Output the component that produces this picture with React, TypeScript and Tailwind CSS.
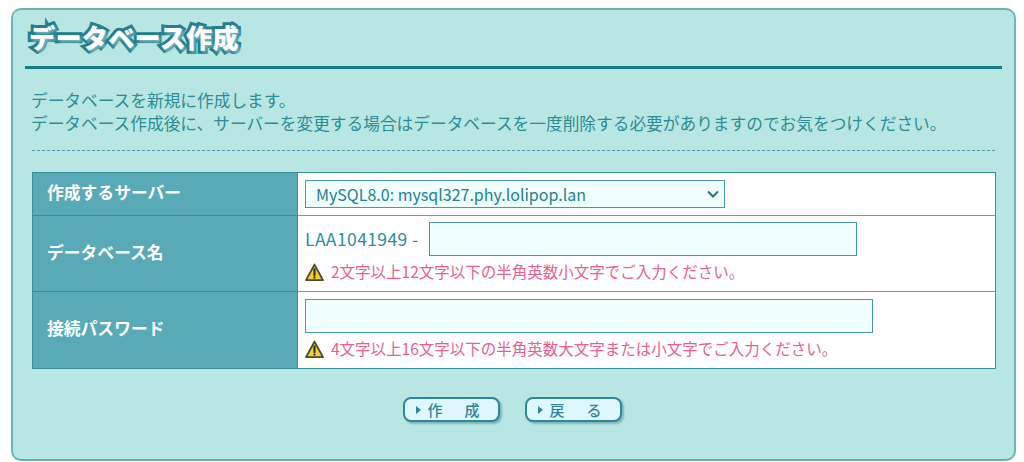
const font = "[font-family:'Noto_Sans_CJK_JP','Noto_Sans',sans-serif]";

function Warning() {
  return (
    <svg width="19" height="19" viewBox="0 0 18 18" className="shrink-0">
      <path d="M9 1.5L17 16.2H1Z" fill="#f3cf2d" stroke="#4a4a38" strokeWidth="1.8" strokeLinejoin="round" />
      <path d="M9 6v5.5" stroke="#33302a" strokeWidth="2" strokeLinecap="round" />
      <circle cx="9" cy="13.8" r="1.1" fill="#33302a" />
    </svg>
  );
}

function Note({ children }: { children: string }) {
  return (
    <div className="flex items-center gap-[7px] text-[15.5px] leading-[20px] text-[#e8608f]">
      <Warning />
      <span className="-translate-y-[1px]">{children}</span>
    </div>
  );
}

function ImgButton({ first, last }: { first: string; last: string }) {
  return (
    <button className="flex h-[25px] w-[97px] items-center rounded-[8px] border-2 border-[#2f8795] bg-[#dff6fd] pl-[11px] text-[15px] leading-none font-medium text-[#2f8795] shadow-[2px_2px_2px_#7fb5bd]">
      <span className="mr-[7px] h-0 w-0 border-y-[4px] border-l-[5px] border-y-transparent border-l-[#2f8795]" />
      <span className="w-[37px] text-left">{first}</span>
      <span>{last}</span>
    </button>
  );
}

export default function App() {
  return (
    <div className={`h-[462px] w-[1024px] overflow-hidden bg-white pt-[8px] pl-[11px] ${font}`}>
      <div className="h-[453px] w-[1005px] rounded-[10px] border-2 border-[#6db5ba] border-t-[#6fb2b6] border-b-[#6aa9ae] bg-[#b8e7e3] px-[12px] pt-[9px]">
        <div className="h-[50px] border-b-[3px] border-[#137c88] pl-[4px]">
          <h1 className="-translate-y-[3px] text-[26.2px] leading-[42px] font-black tracking-[0.2px] text-white [-webkit-text-stroke:6px_#237f8e] [paint-order:stroke_fill] [text-shadow:2px_2px_3px_#7fb5bd]">
            データベース作成
          </h1>
        </div>

        <div className="mx-[7px]">
          <p className="pt-[20px] pb-[15px] -ml-[1px] text-[16.7px] leading-[23px] text-[#2b8d97]">
            データベースを新規に作成します。
            <br />
            データベース作成後に、サーバーを変更する場合はデータベースを一度削除する必要がありますのでお気をつけください。
          </p>
          <div className="border-t border-dashed border-[#4b9fa6]" />

          <div className="mt-[21px] grid h-[197px] w-[964px] grid-cols-[265px_1fr] grid-rows-[43px_76px_1fr] border border-[#3b8f9c] bg-white">
            <div className="flex items-center border-r border-b border-[#3b8f9c] bg-[#58aab7] pb-[2px] pl-[14px] text-[16.8px] font-bold text-white">
              作成するサーバー
            </div>
            <div className="flex items-center border-b border-[#5ea5ac] pl-[7px]">
              <div className="flex h-[28px] w-[420px] items-center justify-between border border-[#4b9aa3] bg-[#effffe] pr-[4px] pl-[10px] text-[16px] text-[#267f8c]">
                <span>MySQL8.0: mysql327.phy.lolipop.lan</span>
                <svg width="14" height="14" viewBox="0 0 14 14" fill="none">
                  <path d="M2 4.5L7 9.5L12 4.5" stroke="#267480" strokeWidth="2" />
                </svg>
              </div>
            </div>

            <div className="flex items-center border-r border-b border-[#3b8f9c] bg-[#58aab7] pb-[2px] pl-[14px] text-[16.8px] font-bold text-white">
              データベース名
            </div>
            <div className="flex flex-col gap-[6px] border-b border-[#5ea5ac] pt-[6px] pl-[7px]">
              <div className="flex items-center gap-[6px] text-[17.5px] tracking-[0.4px] text-[#2b8d97]">
                <span className="w-[118px] whitespace-nowrap">LAA1041949 -</span>
                <div className="h-[34px] w-[428px] border border-[#4b9aa3] bg-[#effffe]" />
              </div>
              <Note>2文字以上12文字以下の半角英数小文字でご入力ください。</Note>
            </div>

            <div className="flex items-center border-r border-[#3b8f9c] bg-[#58aab7] pb-[3px] pl-[14px] text-[16.8px] font-bold text-white">
              接続パスワード
            </div>
            <div className="flex flex-col gap-[6px] pt-[7px] pl-[7px]">
              <div className="h-[34px] w-[568px] border border-[#4b9aa3] bg-[#effffe]" />
              <Note>4文字以上16文字以下の半角英数大文字または小文字でご入力ください。</Note>
            </div>
          </div>

          <div className="mt-[28px] flex justify-center gap-[25px] pr-[3px]">
            <ImgButton first="作" last="成" />
            <ImgButton first="戻" last="る" />
          </div>
        </div>
      </div>
    </div>
  );
}
